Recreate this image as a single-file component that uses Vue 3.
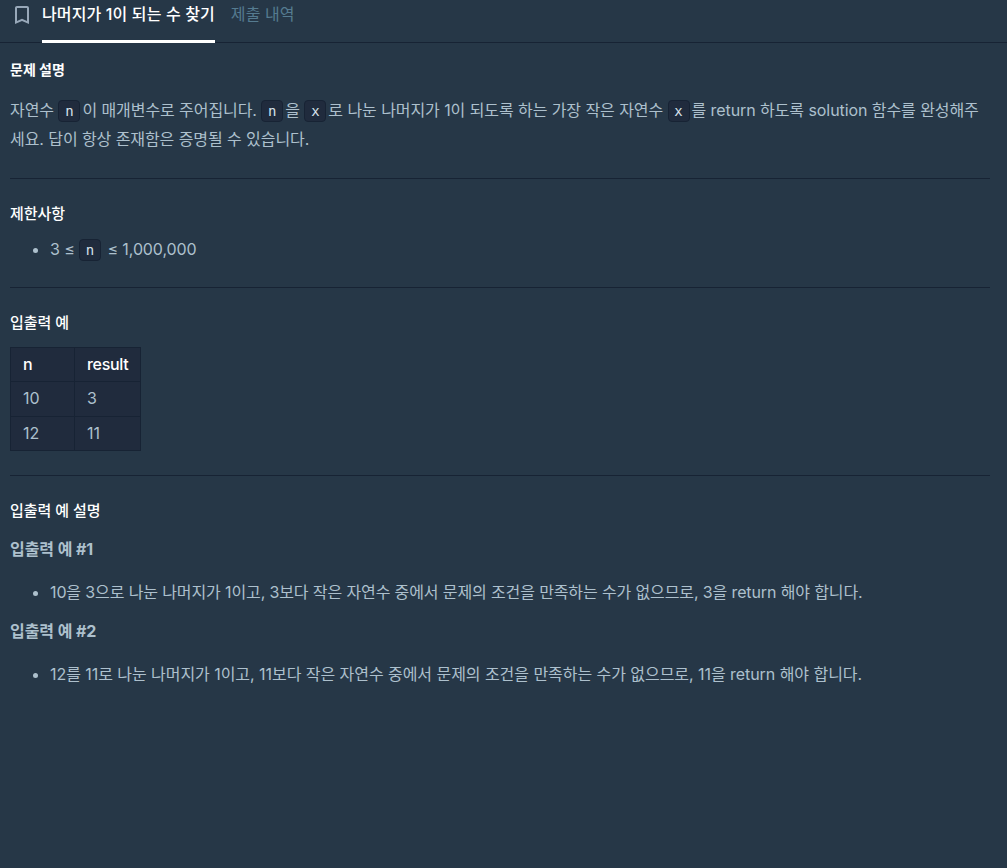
<template>
  <main class="challenge">
    <nav class="tabs">
      <svg class="bookmark" width="24" height="24" viewBox="0 0 24 24" aria-label="bookmark">
        <path
          fill="currentColor"
          d="M17 3H7c-1.1 0-2 .9-2 2v16l7-3 7 3V5c0-1.1-.9-2-2-2zm0 15-5-2.18L7 18V5h10v13z"
        />
      </svg>
      <a
        v-for="tab in tabs"
        :key="tab"
        class="tab"
        :class="{ active: tab === current }"
        @click="current = tab"
      >{{ tab }}</a>
    </nav>

    <article class="guide">
      <section class="description">
        <h6 class="strong">문제 설명</h6>
        <p>자연수 <code>n</code>이 매개변수로 주어집니다. <code>n</code>을 <code>x</code>로 나눈 나머지가 1이 되도록 하는 가장 작은 자연수 <code>x</code>를 return 하도록 solution 함수를 완성해주세요. 답이 항상 존재함은 증명될 수 있습니다.</p>
      </section>

      <section class="limits">
        <h6>제한사항</h6>
        <ul>
          <li>3 ≤ <code>n</code> ≤ 1,000,000</li>
        </ul>
      </section>

      <section class="samples">
        <h6>입출력 예</h6>
        <table>
          <thead>
            <tr>
              <th>n</th>
              <th>result</th>
            </tr>
          </thead>
          <tbody>
            <tr v-for="row in samples" :key="row.n">
              <td>{{ row.n }}</td>
              <td>{{ row.result }}</td>
            </tr>
          </tbody>
        </table>
      </section>

      <section class="explain">
        <h6>입출력 예 설명</h6>
        <div v-for="(text, i) in explanations" :key="i" class="case">
          <strong>입출력 예 #{{ i + 1 }}</strong>
          <ul>
            <li>{{ text }}</li>
          </ul>
        </div>
      </section>
    </article>
  </main>
</template>

<script setup>
import { ref } from 'vue'

const tabs = ['나머지가 1이 되는 수 찾기', '제출 내역']
const current = ref(tabs[0])

const samples = [
  { n: 10, result: 3 },
  { n: 12, result: 11 },
]

const explanations = [
  '10을 3으로 나눈 나머지가 1이고, 3보다 작은 자연수 중에서 문제의 조건을 만족하는 수가 없으므로, 3을 return 해야 합니다.',
  '12를 11로 나눈 나머지가 1이고, 11보다 작은 자연수 중에서 문제의 조건을 만족하는 수가 없으므로, 11을 return 해야 합니다.',
]
</script>

<style>
body {
  background: #263747;
}
</style>

<style scoped>
.challenge {
  min-height: 100vh;
  background: #263747;
  color: #adc0cd;
  font-family: Inter, 'Noto Sans CJK KR', sans-serif;
  font-size: 16px;
}

.tabs {
  display: flex;
  height: 42px;
  padding-left: 10px;
  border-bottom: 1px solid #172334;
}

.bookmark {
  margin: 3px 8px 0 0;
  color: #98a8b9;
}

.tab {
  height: 40px;
  margin-right: 16px;
  border-bottom: 3px solid transparent;
  line-height: 28px;
  color: #557b90;
  letter-spacing: 0.05px;
  white-space: nowrap;
  cursor: pointer;
}

.tab.active {
  border-color: #fff;
  color: #fff;
  font-weight: 500;
  letter-spacing: 0.13px;
}

.guide {
  padding: 15px 17px 0 10px;
}

section {
  box-sizing: border-box;
  border-bottom: 1px solid #172334;
}

h6 {
  margin: 0;
  color: #fff;
  font-size: 15px;
  font-weight: 500;
  line-height: 24px;
  letter-spacing: -0.05px;
}

h6.strong {
  font-size: 14px;
  font-weight: 700;
  letter-spacing: 0;
}

p {
  margin: 14px 0 0;
  line-height: 28.8px;
  letter-spacing: -0.075px;
}

ul {
  margin: 0;
  padding-left: 40px;
  line-height: 28px;
}

code {
  display: inline-block;
  box-sizing: border-box;
  width: 22px;
  height: 22px;
  margin-right: 2px;
  border: 1px solid #172334;
  border-radius: 4px;
  background: #202b3d;
  color: #d7e2eb;
  font-family: 'DejaVu Sans Mono', monospace;
  font-size: 14px;
  letter-spacing: 0;
  line-height: 20px;
  text-align: center;
}

.description {
  height: 121px;
}

.limits {
  height: 109px;
  padding-top: 23px;
}

.limits ul {
  margin-top: 9px;
  letter-spacing: -0.1px;
}

.samples {
  height: 188px;
  padding-top: 23px;
}

table {
  margin-top: 12px;
  border-collapse: collapse;
  background: #202b3d;
}

th,
td {
  box-sizing: border-box;
  height: 34.5px;
  padding: 0 12px;
  border: 1px solid #172334;
  line-height: 31px;
  text-align: left;
}

th {
  height: 34px;
  padding-bottom: 1px;
  color: #fff;
  font-weight: 450;
  letter-spacing: -0.32px;
}

th:first-child {
  width: 64px;
}

tbody tr:first-child td {
  padding-bottom: 1px;
}

.explain {
  padding-top: 23px;
  border-bottom: none;
}

.case {
  height: 82px;
  padding-top: 12px;
  box-sizing: border-box;
}

.case strong {
  display: block;
  line-height: 28px;
  letter-spacing: -0.08px;
}

.case ul {
  margin-top: 15px;
  letter-spacing: -0.12px;
}

.case:last-child ul {
  letter-spacing: -0.05px;
}
</style>
